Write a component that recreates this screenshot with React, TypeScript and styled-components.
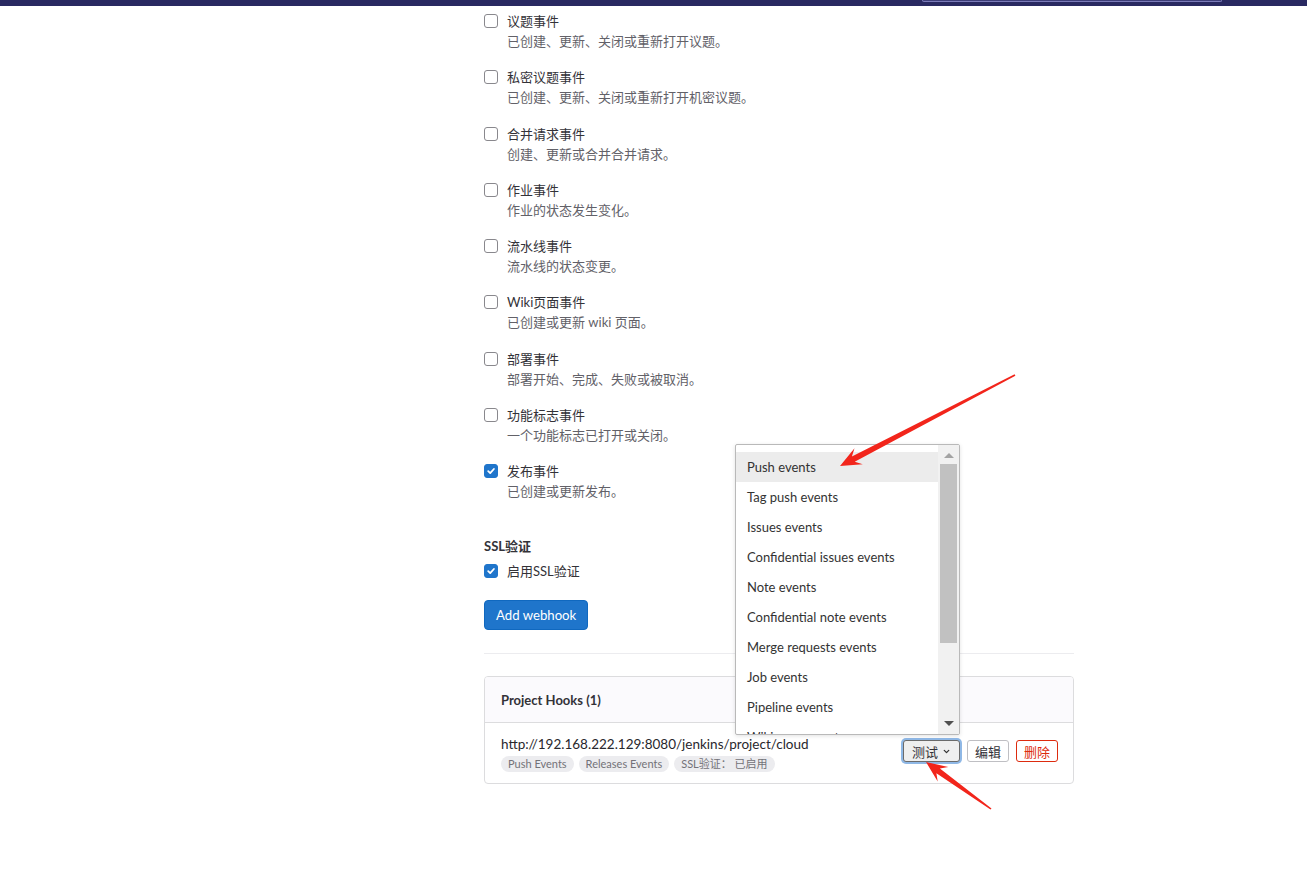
import React from "react";
import styled, { createGlobalStyle } from "styled-components";

const Global = createGlobalStyle`
  html, body { margin: 0; padding: 0; background: #fff; }
  body {
    font-family: Lato, "Noto Sans CJK SC", "Noto Sans", sans-serif;
    font-size: 13px;
    color: #333238;
  }
  * { box-sizing: border-box; }
`;

const Page = styled.div`
  position: relative;
  width: 1307px;
  height: 869px;
  overflow: hidden;
`;

const TopBar = styled.div`
  height: 6px;
  background: #292961;
  position: relative;
`;

const SearchEdge = styled.div`
  position: absolute;
  left: 922px;
  top: 0;
  width: 300px;
  height: 2px;
  background: #3d3d78;
  border: 1px solid #7b7bb8;
  border-top: none;
  border-radius: 0 0 3px 3px;
`;

const Main = styled.main`
  margin-left: 484px;
  width: 590px;
  padding-top: 5px;
`;

const EventList = styled.div`
  display: flex;
  flex-direction: column;
  gap: 16.25px;
`;

const CheckRow = styled.label`
  display: grid;
  grid-template-columns: 14px 1fr;
  column-gap: 9px;
  line-height: 20px;
`;

const Box = styled.span<{ $checked?: boolean }>`
  width: 14px;
  height: 14px;
  margin-top: 3px;
  border-radius: 3px;
  border: 1px solid ${(p) => (p.$checked ? "#1f75cb" : "#89888d")};
  background: ${(p) => (p.$checked ? "#1f75cb" : "#fff")};
  display: flex;
  align-items: center;
  justify-content: center;
`;

const Label = styled.span`
  color: #333238;
`;

const Desc = styled.span`
  grid-column: 2;
  color: #626168;
`;

const Heading = styled.div`
  margin-top: 35px;
  font-weight: 700;
  line-height: 20px;
`;

const SslRow = styled(CheckRow)`
  margin-top: 5px;
`;

const PrimaryButton = styled.button`
  margin-top: 19px;
  height: 30px;
  padding: 0 11px;
  border: 1px solid #1068bf;
  border-radius: 4px;
  background: #1f75cb;
  color: #fff;
  font-family: inherit;
  font-size: 13.2px;
  display: block;
`;

const Rule = styled.hr`
  margin: 23px 0 0;
  border: none;
  border-top: 1px solid #ececef;
`;

const Card = styled.section`
  margin-top: 22px;
  border: 1px solid #dcdcde;
  border-radius: 4px;
  overflow: hidden;
`;

const CardHeader = styled.div`
  height: 46px;
  padding: 0 16px;
  display: flex;
  align-items: center;
  background: #fbfafd;
  border-bottom: 1px solid #dcdcde;
  font-weight: 700;
  color: #333238;
`;

const CardBody = styled.div`
  padding: 11px 15px 11px 16px;
  display: flex;
  align-items: center;
  justify-content: space-between;
`;

const HookInfo = styled.div`
  display: flex;
  flex-direction: column;
`;

const HookUrl = styled.div`
  line-height: 20px;
  font-size: 13.5px;
  color: #28272d;
`;

const Tags = styled.div`
  display: flex;
  gap: 5px;
  margin-top: 2px;
`;

const Tag = styled.span`
  height: 16px;
  padding: 0 7px;
  border-radius: 8px;
  background: #ececef;
  color: #737278;
  font-size: 11px;
  line-height: 16px;
`;

const Actions = styled.div`
  display: flex;
  align-items: center;
  gap: 7px;
  margin-top: -4px;
`;

const SmallButton = styled.button<{ $variant?: "focus" | "danger" }>`
  height: 22px;
  padding: 0 ${(p) => (p.$variant === "focus" ? "8px" : "7px")};
  font-family: inherit;
  font-size: 13px;
  border-radius: 3px;
  display: flex;
  align-items: center;
  gap: 4px;
  color: ${(p) => (p.$variant === "danger" ? "#dd2b0e" : "#333238")};
  background: ${(p) => (p.$variant === "focus" ? "#efefef" : "#fff")};
  border: 1px solid
    ${(p) =>
      p.$variant === "danger"
        ? "#dd2b0e"
        : p.$variant === "focus"
        ? "#6b6b6b"
        : "#bfbfc3"};
  box-shadow: ${(p) =>
    p.$variant === "focus" ? "0 0 0 2px #8fb8e6" : "none"};
`;

const Dropdown = styled.div`
  position: absolute;
  left: 735px;
  top: 444px;
  width: 225px;
  height: 291px;
  border: 1px solid #b9b9b9;
  border-radius: 2px;
  background: #fff;
  box-shadow: 0 1px 4px rgba(0, 0, 0, 0.12);
  overflow: hidden;
`;

const OptionList = styled.ul`
  list-style: none;
  margin: 0;
  padding: 7px 0 0;
  width: 202px;
`;

const Option = styled.li<{ $active?: boolean }>`
  height: 30px;
  line-height: 30px;
  padding-left: 11px;
  color: #333;
  font-size: 13px;
  background: ${(p) => (p.$active ? "#ececec" : "transparent")};
`;

const ScrollTrack = styled.div`
  position: absolute;
  right: 0;
  top: 0;
  bottom: 0;
  width: 21px;
  background: #f1f1f1;
  display: flex;
  flex-direction: column;
  align-items: center;
`;

const ScrollArrow = styled.div<{ $down?: boolean }>`
  width: 0;
  height: 0;
  border-left: 5px solid transparent;
  border-right: 5px solid transparent;
  ${(p) =>
    p.$down
      ? "border-top: 5px solid #505050; margin-top: auto; margin-bottom: 8px;"
      : "border-bottom: 5px solid #a3a3a3; margin-top: 8px;"}
`;

const ScrollThumb = styled.div`
  width: 17px;
  height: 179px;
  margin-top: 6px;
  background: #c1c1c1;
`;

const Overlay = styled.svg`
  position: absolute;
  left: 0;
  top: 0;
  pointer-events: none;
`;

const Check = () => (
  <svg width="10" height="10" viewBox="0 0 10 10">
    <path
      d="M2.2 5.2 L4.2 7.1 L7.9 3"
      fill="none"
      stroke="#fff"
      strokeWidth="1.8"
      strokeLinecap="round"
      strokeLinejoin="round"
    />
  </svg>
);

const Chevron = () => (
  <svg width="9" height="9" viewBox="0 0 10 10">
    <path
      d="M2.5 3.8 L5 6.3 L7.5 3.8"
      fill="none"
      stroke="#333"
      strokeWidth="1.4"
      strokeLinecap="round"
      strokeLinejoin="round"
    />
  </svg>
);

const events: [string, string, boolean][] = [
  ["议题事件", "已创建、更新、关闭或重新打开议题。", false],
  ["私密议题事件", "已创建、更新、关闭或重新打开机密议题。", false],
  ["合并请求事件", "创建、更新或合并合并请求。", false],
  ["作业事件", "作业的状态发生变化。", false],
  ["流水线事件", "流水线的状态变更。", false],
  ["Wiki页面事件", "已创建或更新 wiki 页面。", false],
  ["部署事件", "部署开始、完成、失败或被取消。", false],
  ["功能标志事件", "一个功能标志已打开或关闭。", false],
  ["发布事件", "已创建或更新发布。", true],
];

const options = [
  "Push events",
  "Tag push events",
  "Issues events",
  "Confidential issues events",
  "Note events",
  "Confidential note events",
  "Merge requests events",
  "Job events",
  "Pipeline events",
  "Wiki page events",
];

function arrowPoints(tx: number, ty: number, px: number, py: number) {
  const dx = px - tx;
  const dy = py - ty;
  const len = Math.hypot(dx, dy);
  const ux = dx / len;
  const uy = dy / len;
  const nx = uy;
  const ny = -ux;
  const at = (d: number, w: number) =>
    `${(px - ux * d + nx * w).toFixed(1)},${(py - uy * d + ny * w).toFixed(1)}`;
  const tail = (w: number) =>
    `${(tx + nx * w).toFixed(1)},${(ty + ny * w).toFixed(1)}`;
  return [
    tail(0.8),
    at(15, 3),
    at(21, 9),
    `${px},${py}`,
    at(21, -9),
    at(15, -3),
    tail(-0.8),
  ].join(" ");
}

export default function App() {
  return (
    <Page>
      <Global />
      <TopBar>
        <SearchEdge />
      </TopBar>
      <Main>
        <EventList>
          {events.map(([label, desc, checked]) => (
            <CheckRow key={label}>
              <Box $checked={checked}>{checked && <Check />}</Box>
              <Label>{label}</Label>
              <Desc>{desc}</Desc>
            </CheckRow>
          ))}
        </EventList>
        <Heading>SSL验证</Heading>
        <SslRow>
          <Box $checked>
            <Check />
          </Box>
          <Label>启用SSL验证</Label>
        </SslRow>
        <PrimaryButton>Add webhook</PrimaryButton>
        <Rule />
        <Card>
          <CardHeader>Project Hooks (1)</CardHeader>
          <CardBody>
            <HookInfo>
              <HookUrl>http://192.168.222.129:8080/jenkins/project/cloud</HookUrl>
              <Tags>
                <Tag>Push Events</Tag>
                <Tag>Releases Events</Tag>
                <Tag>SSL验证： 已启用</Tag>
              </Tags>
            </HookInfo>
            <Actions>
              <SmallButton $variant="focus">
                测试 <Chevron />
              </SmallButton>
              <SmallButton>编辑</SmallButton>
              <SmallButton $variant="danger">删除</SmallButton>
            </Actions>
          </CardBody>
        </Card>
      </Main>
      <Dropdown>
        <OptionList>
          {options.map((o, i) => (
            <Option key={o} $active={i === 0}>
              {o}
            </Option>
          ))}
        </OptionList>
        <ScrollTrack>
          <ScrollArrow />
          <ScrollThumb />
          <ScrollArrow $down />
        </ScrollTrack>
      </Dropdown>
      <Overlay width="1307" height="869">
        <polygon points={arrowPoints(1015, 375, 840, 466)} fill="#f2251b" />
        <polygon points={arrowPoints(991, 809, 926, 762)} fill="#f2251b" />
      </Overlay>
    </Page>
  );
}
